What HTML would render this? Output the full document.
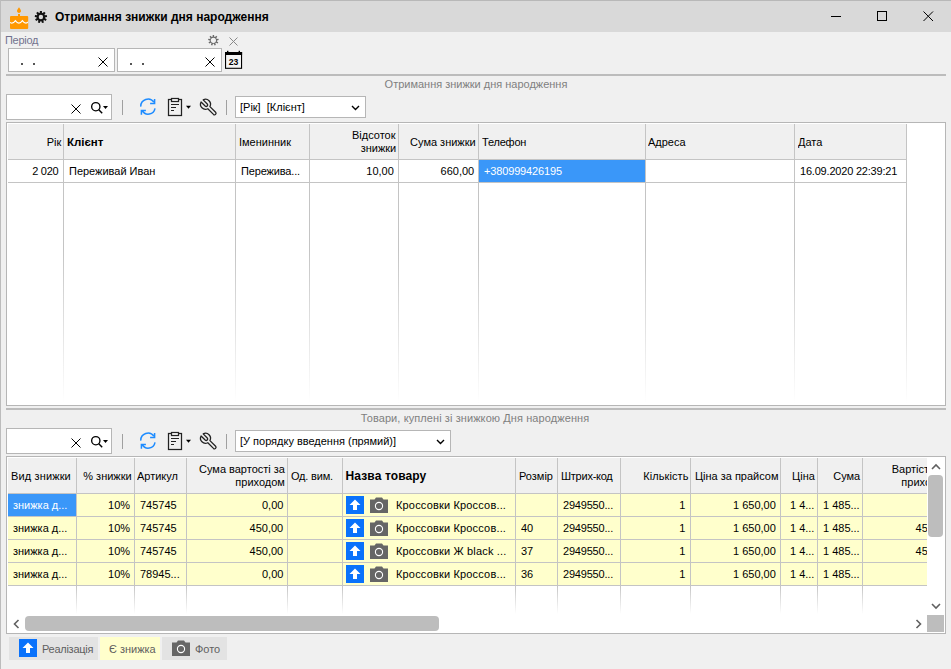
<!DOCTYPE html>
<html><head><meta charset="utf-8"><style>
html,body{margin:0;padding:0;}
body{width:951px;height:669px;overflow:hidden;position:relative;background:#f0f0f0;font-family:"Liberation Sans", sans-serif;}
body>div{position:absolute;}
.t{position:absolute;white-space:nowrap;line-height:14px;}
</style></head><body>
<div style="left:0px;top:0px;width:951px;height:32px;background:#d9d9d9;"></div>
<div style="left:0px;top:0px;width:951px;height:1px;background:#b8b8b8;"></div>
<div style="left:0px;top:0px;width:1px;height:669px;background:#bcbcbc;"></div>
<svg style="position:absolute;left:9px;top:6px;" width="21" height="24" viewBox="0 0 21 24">
<defs><clipPath id="ck"><rect x="1" y="10" width="18.2" height="13" rx="1"/></clipPath></defs>
<path d="M10 1.2 C10.9 2.6 12 3.9 12 5.1 C12 6.2 11.1 7 10 7 C8.9 7 8 6.2 8 5.1 C8 3.9 9.1 2.6 10 1.2Z" fill="#ff9800"/>
<rect x="9" y="8" width="2" height="2.5" fill="#ff9800"/>
<rect x="1" y="10" width="18.2" height="13" rx="1" fill="#ff9800"/>
<path clip-path="url(#ck)" d="M-0.6 14.6 Q2.9 19.6 6.4 14.6 Q9.9 19.6 13.4 14.6 Q16.9 19.6 20.4 14.6" fill="none" stroke="#fff" stroke-width="1.1"/>
</svg>
<svg style="position:absolute;left:34px;top:10px;" width="14" height="14" viewBox="0 0 14 14"><path d="M5.85 2.73 L5.85 0.89 L7.95 0.89 L7.95 2.73 L8.85 3.05 L10.02 1.64 L11.63 2.99 L10.45 4.40 L10.93 5.23 L12.74 4.91 L13.10 6.97 L11.29 7.29 L11.12 8.23 L12.72 9.15 L11.67 10.96 L10.08 10.04 L9.34 10.66 L9.98 12.38 L8.00 13.10 L7.38 11.37 L6.42 11.37 L5.80 13.10 L3.82 12.38 L4.46 10.66 L3.72 10.04 L2.13 10.96 L1.08 9.15 L2.68 8.23 L2.51 7.29 L0.70 6.97 L1.06 4.91 L2.87 5.23 L3.35 4.40 L2.17 2.99 L3.78 1.64 L4.95 3.05Z" fill="#111"/><circle cx="6.9" cy="7.0" r="2.2" fill="#d9d9d9"/></svg>
<div class="t" style="left:55px;top:9.84px;font-size:12px;font-weight:bold;color:#000;">Отримання знижки дня народження</div>
<div style="left:831px;top:16px;width:10px;height:1px;background:#000;"></div>
<div style="left:877px;top:11px;width:8px;height:8px;border:1px solid #000;background:transparent;"></div>
<svg style="position:absolute;left:923px;top:11px;" width="11" height="11" viewBox="0 0 11 11"><path d="M0.5 0.5 L10 10 M10 0.5 L0.5 10" stroke="#000" stroke-width="1"/></svg>
<div class="t" style="left:5.4px;top:33.02px;font-size:11.5px;font-weight:normal;color:#72728e;transform:scaleX(0.955);transform-origin:0 0;letter-spacing:-0.3px;">Період</div>
<div style="left:8px;top:48px;width:105px;height:22px;border:1px solid #b6b6b6;background:#fff;"></div>
<div style="left:117px;top:48px;width:103px;height:22px;border:1px solid #b6b6b6;background:#fff;"></div>
<div style="left:21px;top:63px;width:2px;height:2px;background:#555;"></div>
<div style="left:33px;top:63px;width:2px;height:2px;background:#555;"></div>
<div style="left:130px;top:63px;width:2px;height:2px;background:#555;"></div>
<div style="left:142px;top:63px;width:2px;height:2px;background:#555;"></div>
<svg style="position:absolute;left:98px;top:57px;" width="10" height="10" viewBox="0 0 10 10"><path d="M0.5 0.5 L9.5 9.5 M9.5 0.5 L0.5 9.5" stroke="#000" stroke-width="1.0" fill="none"/></svg>
<svg style="position:absolute;left:205px;top:57px;" width="10" height="10" viewBox="0 0 10 10"><path d="M0.5 0.5 L9.5 9.5 M9.5 0.5 L0.5 9.5" stroke="#000" stroke-width="1.0" fill="none"/></svg>
<svg style="position:absolute;left:224px;top:50px;" width="20" height="20" viewBox="0 0 20 20">
<rect x="1.55" y="2.55" width="16.0" height="15.75" fill="#f4f4f4" stroke="#000" stroke-width="1.1"/>
<rect x="1" y="2" width="17.1" height="3" fill="#000"/>
<rect x="3.0" y="0.8" width="1.4" height="2" fill="#000"/>
<rect x="14.6" y="0.8" width="1.4" height="2" fill="#000"/>
<text x="9.5" y="14.9" font-family="Liberation Sans" font-weight="bold" font-size="8.6" text-anchor="middle" fill="#000">23</text>
</svg>
<svg style="position:absolute;left:208px;top:35px;" width="11" height="11" viewBox="0 0 11 11"><path d="M4.61 1.79 L4.71 0.04 L6.09 0.04 L6.19 1.79 L7.06 2.10 L8.25 0.83 L9.30 1.72 L8.26 3.11 L8.72 3.92 L10.46 3.71 L10.69 5.06 L9.00 5.46 L8.84 6.38 L10.29 7.33 L9.61 8.52 L8.05 7.74 L7.34 8.33 L7.84 10.00 L6.55 10.47 L5.86 8.87 L4.94 8.87 L4.25 10.47 L2.96 10.00 L3.46 8.33 L2.75 7.74 L1.19 8.52 L0.51 7.33 L1.96 6.38 L1.80 5.46 L0.11 5.06 L0.34 3.71 L2.08 3.92 L2.54 3.11 L1.50 1.72 L2.55 0.83 L3.74 2.10Z" fill="#6a6a6a"/><circle cx="5.4" cy="5.3" r="2.6" fill="#f0f0f0"/></svg>
<svg style="position:absolute;left:229px;top:37px;" width="9" height="9" viewBox="0 0 9 9"><path d="M0.5 0.5 L8.5 8.5 M8.5 0.5 L0.5 8.5" stroke="#888" stroke-width="1" fill="none"/></svg>
<div style="left:6px;top:74px;width:940px;height:2px;background:#bcbcbc;"></div>
<div class="t" style="left:175.5px;width:600px;text-align:center;top:77.02px;font-size:11.5px;font-weight:normal;color:#7f7f7f;transform:scaleX(0.955);transform-origin:50% 0;">Отримання знижки дня народження</div>
<div style="left:6px;top:94px;width:104px;height:24px;border:1px solid #b6b6b6;background:#fff;"></div>
<svg style="position:absolute;left:71px;top:104px;" width="10" height="10" viewBox="0 0 10 10"><path d="M0.5 0.5 L9.5 9.5 M9.5 0.5 L0.5 9.5" stroke="#000" stroke-width="1.0" fill="none"/></svg>
<svg style="position:absolute;left:90px;top:101px;" width="20" height="14" viewBox="0 0 20 14">
<circle cx="5.8" cy="5.7" r="4.15" fill="none" stroke="#000" stroke-width="1.35"/>
<path d="M8.8 8.8 L12.2 12.2" stroke="#000" stroke-width="1.45"/>
<path d="M13 5 L18 5 L15.5 8 Z" fill="#000"/>
</svg>
<div style="left:122px;top:100px;width:1px;height:15px;background:#a0a0a0;"></div>
<svg style="position:absolute;left:138px;top:97px;" width="20" height="20" viewBox="0 0 20 20">
<path d="M2.8 9.6 A7.2 7.2 0 0 1 15.9 5.17 M16.6 2.1 L16.6 6.5 L12.1 6.5" fill="none" stroke="#1e8cff" stroke-width="1.5"/>
<path d="M17.0 11.4 A6.9 6.9 0 0 1 4.22 13.65 M7.9 13.5 L3.4 13.5 L3.4 17.8" fill="none" stroke="#1e8cff" stroke-width="1.5"/>
</svg>
<svg style="position:absolute;left:167px;top:97px;" width="26" height="20" viewBox="0 0 26 20">
<rect x="1.5" y="2.5" width="13" height="16" fill="none" stroke="#222" stroke-width="1.25"/>
<rect x="4.5" y="1.5" width="7" height="3" fill="#fff" stroke="#222" stroke-width="1.25"/>
<path d="M4 7.5 H12 M4 10.5 H9 M4 13.5 H7" stroke="#222" stroke-width="1.2"/>
<path d="M19 8.8 L24 8.8 L21.5 11.8 Z" fill="#000"/>
</svg>
<svg style="position:absolute;left:198px;top:97px;" width="20" height="20" viewBox="0 0 20 20">
<path d="M11.93 9.61 L17.61 15.29 A1.5 1.5 0 0 1 15.49 17.41 L9.81 11.73 A5 5 0 0 1 3.07 4.99 L7.15 9.07 A1.5 1.5 0 0 0 9.27 6.95 L5.19 2.87 A5 5 0 0 1 11.93 9.61 Z" fill="none" stroke="#222" stroke-width="1.3" stroke-linejoin="round"/>
</svg>
<div style="left:226px;top:100px;width:1px;height:15px;background:#a0a0a0;"></div>
<div style="left:235px;top:96px;width:129px;height:20px;border:1px solid #b6b6b6;background:#fff;"></div>
<div class="t" style="left:240px;top:100.02px;font-size:11.5px;font-weight:normal;color:#000;transform:scaleX(0.955);transform-origin:0 0;">[Рік]&nbsp;&nbsp;[Клієнт]</div>
<svg style="position:absolute;left:351px;top:105px;" width="10" height="6" viewBox="0 0 10 6"><path d="M1 1 L4.5 4.5 L8 1" fill="none" stroke="#000" stroke-width="1.4"/></svg>
<div style="left:6px;top:122px;width:938px;height:282px;border:1px solid #b6b6b6;background:#fff;"></div>
<div style="left:8px;top:124px;width:898px;height:35px;background:#f0f0f0;"></div>
<div style="left:8px;top:159px;width:898px;height:1px;background:#c4c4c4;"></div>
<div style="left:63px;top:124px;width:1px;height:59px;background:#c4c4c4;"></div>
<div style="left:63px;top:183px;width:1px;height:220px;background:;background:linear-gradient(to bottom,#c4c4c4 0%,#c4c4c4 30%,rgba(196,196,196,0) 100%);"></div>
<div style="left:235px;top:124px;width:1px;height:59px;background:#c4c4c4;"></div>
<div style="left:235px;top:183px;width:1px;height:220px;background:;background:linear-gradient(to bottom,#c4c4c4 0%,#c4c4c4 30%,rgba(196,196,196,0) 100%);"></div>
<div style="left:309px;top:124px;width:1px;height:59px;background:#c4c4c4;"></div>
<div style="left:309px;top:183px;width:1px;height:220px;background:;background:linear-gradient(to bottom,#c4c4c4 0%,#c4c4c4 30%,rgba(196,196,196,0) 100%);"></div>
<div style="left:398px;top:124px;width:1px;height:59px;background:#c4c4c4;"></div>
<div style="left:398px;top:183px;width:1px;height:220px;background:;background:linear-gradient(to bottom,#c4c4c4 0%,#c4c4c4 30%,rgba(196,196,196,0) 100%);"></div>
<div style="left:478px;top:124px;width:1px;height:59px;background:#c4c4c4;"></div>
<div style="left:478px;top:183px;width:1px;height:220px;background:;background:linear-gradient(to bottom,#c4c4c4 0%,#c4c4c4 30%,rgba(196,196,196,0) 100%);"></div>
<div style="left:645px;top:124px;width:1px;height:59px;background:#c4c4c4;"></div>
<div style="left:645px;top:183px;width:1px;height:220px;background:;background:linear-gradient(to bottom,#c4c4c4 0%,#c4c4c4 30%,rgba(196,196,196,0) 100%);"></div>
<div style="left:794px;top:124px;width:1px;height:59px;background:#c4c4c4;"></div>
<div style="left:794px;top:183px;width:1px;height:220px;background:;background:linear-gradient(to bottom,#c4c4c4 0%,#c4c4c4 30%,rgba(196,196,196,0) 100%);"></div>
<div style="left:906px;top:124px;width:1px;height:59px;background:#c4c4c4;"></div>
<div style="left:906px;top:183px;width:1px;height:220px;background:;background:linear-gradient(to bottom,#c4c4c4 0%,#c4c4c4 30%,rgba(196,196,196,0) 100%);"></div>
<div style="left:479px;top:160px;width:166px;height:22px;background:#3a97f9;"></div>
<div style="left:8px;top:182px;width:898px;height:1px;background:#c4c4c4;"></div>
<div class="t" style="right:890.00px;top:135.02px;font-size:11.5px;font-weight:normal;color:#000;transform:scaleX(0.955);transform-origin:100% 0;">Рік</div>
<div class="t" style="left:67px;top:135.02px;font-size:11.5px;font-weight:bold;color:#000;">Клієнт</div>
<div class="t" style="left:238.5px;top:135.02px;font-size:11.5px;font-weight:normal;color:#000;transform:scaleX(0.955);transform-origin:0 0;">Іменинник</div>
<div class="t" style="right:555.00px;top:128.02px;font-size:11.5px;font-weight:normal;color:#000;transform:scaleX(0.955);transform-origin:100% 0;">Відсоток</div>
<div class="t" style="right:555.00px;top:141.02px;font-size:11.5px;font-weight:normal;color:#000;transform:scaleX(0.955);transform-origin:100% 0;">знижки</div>
<div class="t" style="right:475.00px;top:135.02px;font-size:11.5px;font-weight:normal;color:#000;transform:scaleX(0.955);transform-origin:100% 0;">Сума знижки</div>
<div class="t" style="left:482px;top:135.02px;font-size:11.5px;font-weight:normal;color:#000;letter-spacing:-0.2px;transform:scaleX(0.955);transform-origin:0 0;">Телефон</div>
<div class="t" style="left:648px;top:135.02px;font-size:11.5px;font-weight:normal;color:#000;transform:scaleX(0.955);transform-origin:0 0;">Адреса</div>
<div class="t" style="left:798px;top:135.02px;font-size:11.5px;font-weight:normal;color:#000;transform:scaleX(0.955);transform-origin:0 0;">Дата</div>
<div class="t" style="right:892.30px;top:164.02px;font-size:11.5px;font-weight:normal;color:#000;letter-spacing:-0.3px;transform:scaleX(0.955);transform-origin:100% 0;">2 020</div>
<div class="t" style="left:68.5px;top:164.02px;font-size:11.5px;font-weight:normal;color:#000;transform:scaleX(0.955);transform-origin:0 0;">Переживай Иван</div>
<div class="t" style="left:240.5px;top:164.02px;font-size:11.5px;font-weight:normal;color:#000;letter-spacing:-0.15px;transform:scaleX(0.955);transform-origin:0 0;">Пережива...</div>
<div class="t" style="right:557.00px;top:164.02px;font-size:11.5px;font-weight:normal;color:#000;transform:scaleX(0.955);transform-origin:100% 0;">10,00</div>
<div class="t" style="right:477.00px;top:164.02px;font-size:11.5px;font-weight:normal;color:#000;transform:scaleX(0.955);transform-origin:100% 0;">660,00</div>
<div class="t" style="left:483.5px;top:164.02px;font-size:11.5px;font-weight:normal;color:#fff;letter-spacing:-0.15px;transform:scaleX(0.955);transform-origin:0 0;">+380999426195</div>
<div class="t" style="left:800px;top:164.02px;font-size:11.5px;font-weight:normal;color:#000;letter-spacing:-0.2px;transform:scaleX(0.955);transform-origin:0 0;">16.09.2020 22:39:21</div>
<div style="left:6px;top:408px;width:940px;height:2px;background:#bcbcbc;"></div>
<div class="t" style="left:174.5px;width:600px;text-align:center;top:411.02px;font-size:11.5px;font-weight:normal;color:#7f7f7f;letter-spacing:0.1px;transform:scaleX(0.955);transform-origin:50% 0;">Товари, куплені зі знижкою Дня народження</div>
<div style="left:6px;top:428px;width:104px;height:24px;border:1px solid #b6b6b6;background:#fff;"></div>
<svg style="position:absolute;left:71px;top:438px;" width="10" height="10" viewBox="0 0 10 10"><path d="M0.5 0.5 L9.5 9.5 M9.5 0.5 L0.5 9.5" stroke="#000" stroke-width="1.0" fill="none"/></svg>
<svg style="position:absolute;left:90px;top:435px;" width="20" height="14" viewBox="0 0 20 14">
<circle cx="5.8" cy="5.7" r="4.15" fill="none" stroke="#000" stroke-width="1.35"/>
<path d="M8.8 8.8 L12.2 12.2" stroke="#000" stroke-width="1.45"/>
<path d="M13 5 L18 5 L15.5 8 Z" fill="#000"/>
</svg>
<div style="left:122px;top:434px;width:1px;height:15px;background:#a0a0a0;"></div>
<svg style="position:absolute;left:138px;top:431px;" width="20" height="20" viewBox="0 0 20 20">
<path d="M2.8 9.6 A7.2 7.2 0 0 1 15.9 5.17 M16.6 2.1 L16.6 6.5 L12.1 6.5" fill="none" stroke="#1e8cff" stroke-width="1.5"/>
<path d="M17.0 11.4 A6.9 6.9 0 0 1 4.22 13.65 M7.9 13.5 L3.4 13.5 L3.4 17.8" fill="none" stroke="#1e8cff" stroke-width="1.5"/>
</svg>
<svg style="position:absolute;left:167px;top:431px;" width="26" height="20" viewBox="0 0 26 20">
<rect x="1.5" y="2.5" width="13" height="16" fill="none" stroke="#222" stroke-width="1.25"/>
<rect x="4.5" y="1.5" width="7" height="3" fill="#fff" stroke="#222" stroke-width="1.25"/>
<path d="M4 7.5 H12 M4 10.5 H9 M4 13.5 H7" stroke="#222" stroke-width="1.2"/>
<path d="M19 8.8 L24 8.8 L21.5 11.8 Z" fill="#000"/>
</svg>
<svg style="position:absolute;left:198px;top:431px;" width="20" height="20" viewBox="0 0 20 20">
<path d="M11.93 9.61 L17.61 15.29 A1.5 1.5 0 0 1 15.49 17.41 L9.81 11.73 A5 5 0 0 1 3.07 4.99 L7.15 9.07 A1.5 1.5 0 0 0 9.27 6.95 L5.19 2.87 A5 5 0 0 1 11.93 9.61 Z" fill="none" stroke="#222" stroke-width="1.3" stroke-linejoin="round"/>
</svg>
<div style="left:226px;top:434px;width:1px;height:15px;background:#a0a0a0;"></div>
<div style="left:235px;top:430px;width:214px;height:20px;border:1px solid #b6b6b6;background:#fff;"></div>
<div class="t" style="left:240px;top:434.02px;font-size:11.5px;font-weight:normal;color:#000;transform:scaleX(0.955);transform-origin:0 0;">[У порядку введення (прямий)]</div>
<svg style="position:absolute;left:436px;top:439px;" width="10" height="6" viewBox="0 0 10 6"><path d="M1 1 L4.5 4.5 L8 1" fill="none" stroke="#000" stroke-width="1.4"/></svg>
<div style="left:6px;top:456px;width:938px;height:176px;border:1px solid #b6b6b6;background:#fff;"></div>
<div style="left:8px;top:458px;width:919px;height:35px;background:#f0f0f0;"></div>
<div style="left:8px;top:493px;width:919px;height:1px;background:#c4c4c4;"></div>
<div style="left:8px;top:494px;width:919px;height:22px;background:#ffffcc;"></div>
<div style="left:8px;top:516px;width:919px;height:1px;background:#c4c4c4;"></div>
<div style="left:8px;top:517px;width:919px;height:22px;background:#ffffcc;"></div>
<div style="left:8px;top:539px;width:919px;height:1px;background:#c4c4c4;"></div>
<div style="left:8px;top:540px;width:919px;height:22px;background:#ffffcc;"></div>
<div style="left:8px;top:562px;width:919px;height:1px;background:#c4c4c4;"></div>
<div style="left:8px;top:563px;width:919px;height:22px;background:#ffffcc;"></div>
<div style="left:8px;top:585px;width:919px;height:1px;background:#c4c4c4;"></div>
<div style="left:8px;top:494px;width:68px;height:22px;background:#3a97f9;"></div>
<div style="left:76px;top:458px;width:1px;height:128px;background:#c4c4c4;"></div>
<div style="left:76px;top:586px;width:1px;height:28px;background:;background:linear-gradient(to bottom,#c4c4c4 0%,rgba(196,196,196,0) 100%);"></div>
<div style="left:134px;top:458px;width:1px;height:128px;background:#c4c4c4;"></div>
<div style="left:134px;top:586px;width:1px;height:28px;background:;background:linear-gradient(to bottom,#c4c4c4 0%,rgba(196,196,196,0) 100%);"></div>
<div style="left:186px;top:458px;width:1px;height:128px;background:#c4c4c4;"></div>
<div style="left:186px;top:586px;width:1px;height:28px;background:;background:linear-gradient(to bottom,#c4c4c4 0%,rgba(196,196,196,0) 100%);"></div>
<div style="left:287px;top:458px;width:1px;height:128px;background:#c4c4c4;"></div>
<div style="left:287px;top:586px;width:1px;height:28px;background:;background:linear-gradient(to bottom,#c4c4c4 0%,rgba(196,196,196,0) 100%);"></div>
<div style="left:342px;top:458px;width:1px;height:128px;background:#c4c4c4;"></div>
<div style="left:342px;top:586px;width:1px;height:28px;background:;background:linear-gradient(to bottom,#c4c4c4 0%,rgba(196,196,196,0) 100%);"></div>
<div style="left:515px;top:458px;width:1px;height:128px;background:#c4c4c4;"></div>
<div style="left:515px;top:586px;width:1px;height:28px;background:;background:linear-gradient(to bottom,#c4c4c4 0%,rgba(196,196,196,0) 100%);"></div>
<div style="left:557px;top:458px;width:1px;height:128px;background:#c4c4c4;"></div>
<div style="left:557px;top:586px;width:1px;height:28px;background:;background:linear-gradient(to bottom,#c4c4c4 0%,rgba(196,196,196,0) 100%);"></div>
<div style="left:620px;top:458px;width:1px;height:128px;background:#c4c4c4;"></div>
<div style="left:620px;top:586px;width:1px;height:28px;background:;background:linear-gradient(to bottom,#c4c4c4 0%,rgba(196,196,196,0) 100%);"></div>
<div style="left:690px;top:458px;width:1px;height:128px;background:#c4c4c4;"></div>
<div style="left:690px;top:586px;width:1px;height:28px;background:;background:linear-gradient(to bottom,#c4c4c4 0%,rgba(196,196,196,0) 100%);"></div>
<div style="left:780px;top:458px;width:1px;height:128px;background:#c4c4c4;"></div>
<div style="left:780px;top:586px;width:1px;height:28px;background:;background:linear-gradient(to bottom,#c4c4c4 0%,rgba(196,196,196,0) 100%);"></div>
<div style="left:817px;top:458px;width:1px;height:128px;background:#c4c4c4;"></div>
<div style="left:817px;top:586px;width:1px;height:28px;background:;background:linear-gradient(to bottom,#c4c4c4 0%,rgba(196,196,196,0) 100%);"></div>
<div style="left:862px;top:458px;width:1px;height:128px;background:#c4c4c4;"></div>
<div style="left:862px;top:586px;width:1px;height:28px;background:;background:linear-gradient(to bottom,#c4c4c4 0%,rgba(196,196,196,0) 100%);"></div>
<div class="t" style="left:10.5px;top:469.02px;font-size:11.5px;font-weight:normal;color:#000;letter-spacing:0.15px;transform:scaleX(0.955);transform-origin:0 0;">Вид знижки</div>
<div class="t" style="right:819.00px;top:469.02px;font-size:11.5px;font-weight:normal;color:#000;transform:scaleX(0.955);transform-origin:100% 0;">% знижки</div>
<div class="t" style="left:136.5px;top:469.02px;font-size:11.5px;font-weight:normal;color:#000;transform:scaleX(0.955);transform-origin:0 0;">Артикул</div>
<div class="t" style="right:666.00px;top:462.02px;font-size:11.5px;font-weight:normal;color:#000;transform:scaleX(0.955);transform-origin:100% 0;">Сума вартості за</div>
<div class="t" style="right:666.00px;top:475.02px;font-size:11.5px;font-weight:normal;color:#000;transform:scaleX(0.955);transform-origin:100% 0;">приходом</div>
<div class="t" style="left:290.5px;top:469.02px;font-size:11.5px;font-weight:normal;color:#000;letter-spacing:-0.2px;transform:scaleX(0.955);transform-origin:0 0;">Од. вим.</div>
<div class="t" style="left:345.5px;top:468.84px;font-size:12px;font-weight:bold;color:#000;letter-spacing:0.12px;">Назва товару</div>
<div class="t" style="left:518.5px;top:469.02px;font-size:11.5px;font-weight:normal;color:#000;transform:scaleX(0.955);transform-origin:0 0;">Розмір</div>
<div class="t" style="left:560.5px;top:469.02px;font-size:11.5px;font-weight:normal;color:#000;letter-spacing:-0.25px;transform:scaleX(0.955);transform-origin:0 0;">Штрих-код</div>
<div class="t" style="right:262.90px;top:469.02px;font-size:11.5px;font-weight:normal;color:#000;letter-spacing:0.1px;transform:scaleX(0.955);transform-origin:100% 0;">Кількість</div>
<div class="t" style="right:173.00px;top:469.02px;font-size:11.5px;font-weight:normal;color:#000;transform:scaleX(0.955);transform-origin:100% 0;">Ціна за прайсом</div>
<div class="t" style="right:136.00px;top:469.02px;font-size:11.5px;font-weight:normal;color:#000;transform:scaleX(0.955);transform-origin:100% 0;">Ціна</div>
<div class="t" style="right:91.00px;top:469.02px;font-size:11.5px;font-weight:normal;color:#000;transform:scaleX(0.955);transform-origin:100% 0;">Сума</div>
<div class="t" style="left:13px;top:498.02px;font-size:11.5px;font-weight:normal;color:#fff;transform:scaleX(0.955);transform-origin:0 0;">знижка д...</div>
<div class="t" style="right:821.00px;top:498.02px;font-size:11.5px;font-weight:normal;color:#000;transform:scaleX(0.955);transform-origin:100% 0;">10%</div>
<div class="t" style="left:140px;top:498.02px;font-size:11.5px;font-weight:normal;color:#000;transform:scaleX(0.955);transform-origin:0 0;">745745</div>
<div class="t" style="right:668.00px;top:498.02px;font-size:11.5px;font-weight:normal;color:#000;transform:scaleX(0.955);transform-origin:100% 0;">0,00</div>
<svg style="position:absolute;left:346px;top:496px;" width="18" height="18" viewBox="0 0 18 18"><rect width="18" height="18" fill="#0a72fb"/><path d="M9 3.5 L14.5 9 L11 9 L11 14 L7 14 L7 9 L3.5 9 Z" fill="#fff"/></svg>
<svg style="position:absolute;left:370px;top:497px;" width="18" height="16" viewBox="0 0 18 16"><path d="M0 2.5 H4.5 L6 0.5 H12 L13.5 2.5 H18 V16 H0 Z" fill="#666"/><circle cx="9" cy="9" r="3.6" fill="none" stroke="#fff" stroke-width="1.1"/></svg>
<div class="t" style="left:395.6px;top:498.02px;font-size:11.5px;font-weight:normal;color:#000;letter-spacing:0.19px;transform:scaleX(0.955);transform-origin:0 0;">Кроссовки Кроссов...</div>
<div class="t" style="left:562.5px;top:498.02px;font-size:11.5px;font-weight:normal;color:#000;letter-spacing:-0.2px;transform:scaleX(0.955);transform-origin:0 0;">2949550...</div>
<div class="t" style="right:266.00px;top:498.02px;font-size:11.5px;font-weight:normal;color:#000;transform:scaleX(0.955);transform-origin:100% 0;">1</div>
<div class="t" style="right:175.00px;top:498.02px;font-size:11.5px;font-weight:normal;color:#000;transform:scaleX(0.955);transform-origin:100% 0;">1 650,00</div>
<div class="t" style="left:790px;top:498.02px;font-size:11.5px;font-weight:normal;color:#000;transform:scaleX(0.955);transform-origin:0 0;">1 4...</div>
<div class="t" style="left:822.5px;top:498.02px;font-size:11.5px;font-weight:normal;color:#000;transform:scaleX(0.955);transform-origin:0 0;">1 485...</div>
<div class="t" style="left:13px;top:521.02px;font-size:11.5px;font-weight:normal;color:#000;transform:scaleX(0.955);transform-origin:0 0;">знижка д...</div>
<div class="t" style="right:821.00px;top:521.02px;font-size:11.5px;font-weight:normal;color:#000;transform:scaleX(0.955);transform-origin:100% 0;">10%</div>
<div class="t" style="left:140px;top:521.02px;font-size:11.5px;font-weight:normal;color:#000;transform:scaleX(0.955);transform-origin:0 0;">745745</div>
<div class="t" style="right:668.00px;top:521.02px;font-size:11.5px;font-weight:normal;color:#000;transform:scaleX(0.955);transform-origin:100% 0;">450,00</div>
<svg style="position:absolute;left:346px;top:519px;" width="18" height="18" viewBox="0 0 18 18"><rect width="18" height="18" fill="#0a72fb"/><path d="M9 3.5 L14.5 9 L11 9 L11 14 L7 14 L7 9 L3.5 9 Z" fill="#fff"/></svg>
<svg style="position:absolute;left:370px;top:520px;" width="18" height="16" viewBox="0 0 18 16"><path d="M0 2.5 H4.5 L6 0.5 H12 L13.5 2.5 H18 V16 H0 Z" fill="#666"/><circle cx="9" cy="9" r="3.6" fill="none" stroke="#fff" stroke-width="1.1"/></svg>
<div class="t" style="left:395.6px;top:521.02px;font-size:11.5px;font-weight:normal;color:#000;letter-spacing:0.19px;transform:scaleX(0.955);transform-origin:0 0;">Кроссовки Кроссов...</div>
<div class="t" style="left:520.5px;top:521.02px;font-size:11.5px;font-weight:normal;color:#000;transform:scaleX(0.955);transform-origin:0 0;">40</div>
<div class="t" style="left:562.5px;top:521.02px;font-size:11.5px;font-weight:normal;color:#000;letter-spacing:-0.2px;transform:scaleX(0.955);transform-origin:0 0;">2949550...</div>
<div class="t" style="right:266.00px;top:521.02px;font-size:11.5px;font-weight:normal;color:#000;transform:scaleX(0.955);transform-origin:100% 0;">1</div>
<div class="t" style="right:175.00px;top:521.02px;font-size:11.5px;font-weight:normal;color:#000;transform:scaleX(0.955);transform-origin:100% 0;">1 650,00</div>
<div class="t" style="left:790px;top:521.02px;font-size:11.5px;font-weight:normal;color:#000;transform:scaleX(0.955);transform-origin:0 0;">1 4...</div>
<div class="t" style="left:822.5px;top:521.02px;font-size:11.5px;font-weight:normal;color:#000;transform:scaleX(0.955);transform-origin:0 0;">1 485...</div>
<div class="t" style="left:13px;top:544.02px;font-size:11.5px;font-weight:normal;color:#000;transform:scaleX(0.955);transform-origin:0 0;">знижка д...</div>
<div class="t" style="right:821.00px;top:544.02px;font-size:11.5px;font-weight:normal;color:#000;transform:scaleX(0.955);transform-origin:100% 0;">10%</div>
<div class="t" style="left:140px;top:544.02px;font-size:11.5px;font-weight:normal;color:#000;transform:scaleX(0.955);transform-origin:0 0;">745745</div>
<div class="t" style="right:668.00px;top:544.02px;font-size:11.5px;font-weight:normal;color:#000;transform:scaleX(0.955);transform-origin:100% 0;">450,00</div>
<svg style="position:absolute;left:346px;top:542px;" width="18" height="18" viewBox="0 0 18 18"><rect width="18" height="18" fill="#0a72fb"/><path d="M9 3.5 L14.5 9 L11 9 L11 14 L7 14 L7 9 L3.5 9 Z" fill="#fff"/></svg>
<svg style="position:absolute;left:370px;top:543px;" width="18" height="16" viewBox="0 0 18 16"><path d="M0 2.5 H4.5 L6 0.5 H12 L13.5 2.5 H18 V16 H0 Z" fill="#666"/><circle cx="9" cy="9" r="3.6" fill="none" stroke="#fff" stroke-width="1.1"/></svg>
<div class="t" style="left:395.6px;top:544.02px;font-size:11.5px;font-weight:normal;color:#000;letter-spacing:0.19px;transform:scaleX(0.955);transform-origin:0 0;">Кроссовки Ж black ...</div>
<div class="t" style="left:520.5px;top:544.02px;font-size:11.5px;font-weight:normal;color:#000;transform:scaleX(0.955);transform-origin:0 0;">37</div>
<div class="t" style="left:562.5px;top:544.02px;font-size:11.5px;font-weight:normal;color:#000;letter-spacing:-0.2px;transform:scaleX(0.955);transform-origin:0 0;">2949550...</div>
<div class="t" style="right:266.00px;top:544.02px;font-size:11.5px;font-weight:normal;color:#000;transform:scaleX(0.955);transform-origin:100% 0;">1</div>
<div class="t" style="right:175.00px;top:544.02px;font-size:11.5px;font-weight:normal;color:#000;transform:scaleX(0.955);transform-origin:100% 0;">1 650,00</div>
<div class="t" style="left:790px;top:544.02px;font-size:11.5px;font-weight:normal;color:#000;transform:scaleX(0.955);transform-origin:0 0;">1 4...</div>
<div class="t" style="left:822.5px;top:544.02px;font-size:11.5px;font-weight:normal;color:#000;transform:scaleX(0.955);transform-origin:0 0;">1 485...</div>
<div class="t" style="left:13px;top:567.02px;font-size:11.5px;font-weight:normal;color:#000;transform:scaleX(0.955);transform-origin:0 0;">знижка д...</div>
<div class="t" style="right:821.00px;top:567.02px;font-size:11.5px;font-weight:normal;color:#000;transform:scaleX(0.955);transform-origin:100% 0;">10%</div>
<div class="t" style="left:140px;top:567.02px;font-size:11.5px;font-weight:normal;color:#000;transform:scaleX(0.955);transform-origin:0 0;">78945...</div>
<div class="t" style="right:668.00px;top:567.02px;font-size:11.5px;font-weight:normal;color:#000;transform:scaleX(0.955);transform-origin:100% 0;">0,00</div>
<svg style="position:absolute;left:346px;top:565px;" width="18" height="18" viewBox="0 0 18 18"><rect width="18" height="18" fill="#0a72fb"/><path d="M9 3.5 L14.5 9 L11 9 L11 14 L7 14 L7 9 L3.5 9 Z" fill="#fff"/></svg>
<svg style="position:absolute;left:370px;top:566px;" width="18" height="16" viewBox="0 0 18 16"><path d="M0 2.5 H4.5 L6 0.5 H12 L13.5 2.5 H18 V16 H0 Z" fill="#666"/><circle cx="9" cy="9" r="3.6" fill="none" stroke="#fff" stroke-width="1.1"/></svg>
<div class="t" style="left:395.6px;top:567.02px;font-size:11.5px;font-weight:normal;color:#000;letter-spacing:0.19px;transform:scaleX(0.955);transform-origin:0 0;">Кроссовки Кроссов...</div>
<div class="t" style="left:520.5px;top:567.02px;font-size:11.5px;font-weight:normal;color:#000;transform:scaleX(0.955);transform-origin:0 0;">36</div>
<div class="t" style="left:562.5px;top:567.02px;font-size:11.5px;font-weight:normal;color:#000;letter-spacing:-0.2px;transform:scaleX(0.955);transform-origin:0 0;">2949550...</div>
<div class="t" style="right:266.00px;top:567.02px;font-size:11.5px;font-weight:normal;color:#000;transform:scaleX(0.955);transform-origin:100% 0;">1</div>
<div class="t" style="right:175.00px;top:567.02px;font-size:11.5px;font-weight:normal;color:#000;transform:scaleX(0.955);transform-origin:100% 0;">1 650,00</div>
<div class="t" style="left:790px;top:567.02px;font-size:11.5px;font-weight:normal;color:#000;transform:scaleX(0.955);transform-origin:0 0;">1 4...</div>
<div class="t" style="left:822.5px;top:567.02px;font-size:11.5px;font-weight:normal;color:#000;transform:scaleX(0.955);transform-origin:0 0;">1 485...</div>
<div style="left:863px;top:458px;width:64px;height:128px;overflow:hidden;"><div class="t" style="right:-22px;top:4.0px;font-size:11.5px;transform:scaleX(0.955);transform-origin:100% 0;">Вартість за</div><div class="t" style="right:-24px;top:17.0px;font-size:11.5px;transform:scaleX(0.955);transform-origin:100% 0;">приходом</div><div class="t" style="right:-22px;top:63.0px;font-size:11.5px;transform:scaleX(0.955);transform-origin:100% 0;">450,00</div><div class="t" style="right:-22px;top:86.0px;font-size:11.5px;transform:scaleX(0.955);transform-origin:100% 0;">450,00</div></div>
<div style="left:927px;top:458px;width:18px;height:156px;background:#fff;"></div>
<svg style="position:absolute;left:931px;top:463px;" width="10" height="7" viewBox="0 0 10 7"><path d="M1 6 L5 2 L9 6" fill="none" stroke="#606060" stroke-width="1.6"/></svg>
<div style="left:928px;top:475px;width:15px;height:62px;background:#bdbdbd;border-radius:4px;"></div>
<svg style="position:absolute;left:931px;top:603px;" width="10" height="7" viewBox="0 0 10 7"><path d="M1 1 L5 5 L9 1" fill="none" stroke="#606060" stroke-width="1.6"/></svg>
<div style="left:8px;top:614px;width:919px;height:19px;background:#fff;"></div>
<svg style="position:absolute;left:13px;top:619px;" width="7" height="10" viewBox="0 0 7 10"><path d="M5.5 1 L1.5 5 L5.5 9" fill="none" stroke="#606060" stroke-width="1.6"/></svg>
<div style="left:25px;top:616px;width:414px;height:15px;background:#bdbdbd;border-radius:4px;"></div>
<svg style="position:absolute;left:915px;top:619px;" width="7" height="10" viewBox="0 0 7 10"><path d="M1.5 1 L5.5 5 L1.5 9" fill="none" stroke="#606060" stroke-width="1.6"/></svg>
<div style="left:927px;top:615px;width:17px;height:17px;background:#bdbdbd;"></div>
<div style="left:9px;top:637px;width:89px;height:23px;background:#e3e3e3;"></div>
<svg style="position:absolute;left:19px;top:639px;" width="18" height="18" viewBox="0 0 18 18"><rect width="18" height="18" fill="#0a72fb"/><path d="M9 3.5 L14.5 9 L11 9 L11 14 L7 14 L7 9 L3.5 9 Z" fill="#fff"/></svg>
<div class="t" style="left:41.5px;top:642.02px;font-size:11.5px;font-weight:normal;color:#5f5f5f;letter-spacing:-0.27px;transform:scaleX(0.955);transform-origin:0 0;">Реалізація</div>
<div style="left:100px;top:637px;width:60px;height:23px;background:#ffffcc;"></div>
<div class="t" style="left:108.5px;top:642.02px;font-size:11.5px;font-weight:normal;color:#5f5f5f;transform:scaleX(0.955);transform-origin:0 0;">Є знижка</div>
<div style="left:162px;top:637px;width:65px;height:23px;background:#e3e3e3;"></div>
<svg style="position:absolute;left:172px;top:640px;" width="18" height="16" viewBox="0 0 18 16"><path d="M0 2.5 H4.5 L6 0.5 H12 L13.5 2.5 H18 V16 H0 Z" fill="#666"/><circle cx="9" cy="9" r="3.6" fill="none" stroke="#fff" stroke-width="1.1"/></svg>
<div class="t" style="left:195px;top:642.02px;font-size:11.5px;font-weight:normal;color:#5f5f5f;transform:scaleX(0.955);transform-origin:0 0;">Фото</div>
</body></html>
